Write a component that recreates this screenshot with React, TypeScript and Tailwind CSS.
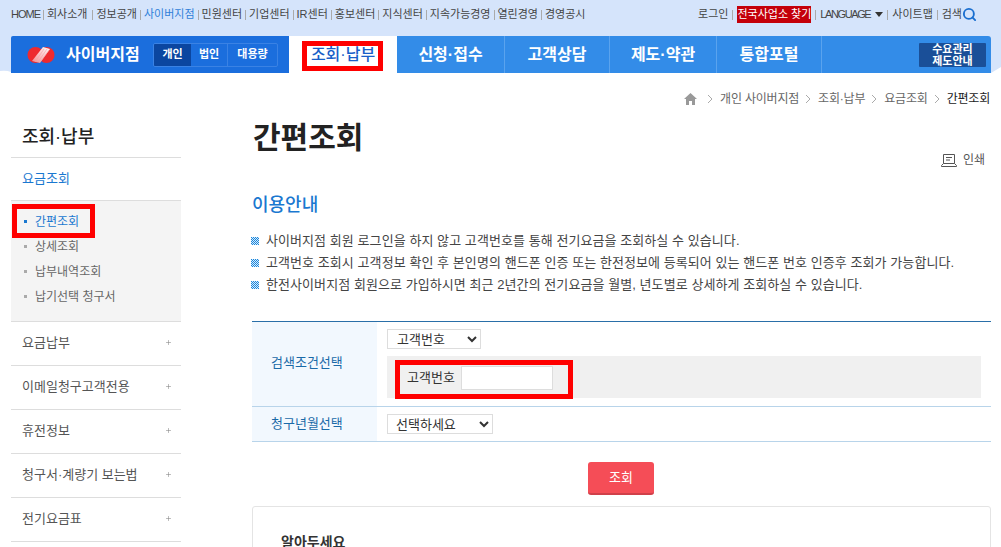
import { Plus, Search } from "lucide-react";

const FONT = "font-['Liberation_Sans','Noto_Sans_CJK_KR',sans-serif]";

const topLinks = ["HOME", "회사소개", "정보공개", "사이버지점", "민원센터", "기업센터", "IR센터", "홍보센터", "지식센터", "지속가능경영", "열린경영", "경영공시"];
const navItems = [
  { label: "신청·접수", width: "w-[108px]" },
  { label: "고객상담", width: "w-[105px]" },
  { label: "제도·약관", width: "w-[107px]" },
  { label: "통합포털", width: "w-[105px]" },
];
const crumbs = ["개인 사이버지점", "조회·납부", "요금조회"];
const subMenu = ["상세조회", "납부내역조회", "납기선택 청구서"];
const sideMenu = ["요금납부", "이메일청구고객전용", "휴전정보", "청구서·계량기 보는법", "전기요금표"];
const notices = [
  "사이버지점 회원 로그인을 하지 않고 고객번호를 통해 전기요금을 조회하실 수 있습니다.",
  "고객번호 조회시 고객정보 확인 후 본인명의 핸드폰 인증 또는 한전정보에 등록되어 있는 핸드폰 번호 인증후 조회가 가능합니다.",
  "한전사이버지점 회원으로 가입하시면 최근 2년간의 전기요금을 월별, 년도별로 상세하게 조회하실 수 있습니다.",
];

function linkClass(link: string) {
  if (link === "사이버지점") return "text-[#2f7fd8]";
  if (link === "HOME") return "tracking-[-1px]";
  if (link === "회사소개") return "mr-[2px]";
  return "";
}

function Logo() {
  return (
    <svg width="28" height="18" viewBox="0 0 28 18" className="shrink-0">
      <defs>
        <linearGradient id="logoBand" x1="0" y1="1" x2="1" y2="0">
          <stop offset="0" stopColor="#f58a8d" />
          <stop offset="1" stopColor="#fff" />
        </linearGradient>
      </defs>
      <circle cx="8.5" cy="9" r="8" fill="#ee2a2e" />
      <circle cx="19.5" cy="9" r="8" fill="#ee2a2e" />
      <path d="M5 15 L16 1 L23 3 L13 17 Z" fill="url(#logoBand)" />
      <path d="M8 16 L17 3 M11 16 L20 3 M14 15 L22 4" stroke="#f7a0a3" strokeWidth="0.6" />
    </svg>
  );
}

function NoticeMark() {
  return (
    <svg width="8" height="8" viewBox="0 0 8 8" className="shrink-0">
      <rect width="8" height="8" fill="#d6ebfb" />
      {[0, 2, 4, 6].map((x) =>
        [0, 2, 4, 6].map((y) => (
          <g key={`${x}-${y}`} fill="#1a86dc">
            <rect x={x} y={y} width="1" height="1" />
            <rect x={x + 1} y={y + 1} width="1" height="1" />
          </g>
        )),
      )}
    </svg>
  );
}

function Chevron() {
  return (
    <svg width="7" height="10" viewBox="0 0 7 10" fill="none" stroke="#aaa" strokeWidth="1" className="shrink-0">
      <path d="M1 1l4 4-4 4" />
    </svg>
  );
}

function Sep({ wide }: { wide?: boolean }) {
  return <span className={`h-[10px] w-px bg-[#aaa] ${wide ? "mx-[4px]" : "mx-[3px]"}`} />;
}

export default function App() {
  return (
    <div className={`relative h-[547px] w-[1001px] overflow-hidden bg-white text-[#444] ${FONT}`}>
      {/* Top band */}
      <header className="relative h-[73px] bg-[#d5e4fb]">
        {/* curved band edges */}
        <svg width="11" height="4" viewBox="0 0 11 4" className="absolute bottom-0 left-0">
          <path d="M0 4V2Q6 1 11 3V4Z" fill="#fff" />
        </svg>
        <svg width="10" height="6" viewBox="0 0 10 6" className="absolute bottom-0 right-0">
          <path d="M0 6L10 0V6Z" fill="#fff" />
        </svg>
        <div className="flex h-[36px] items-center justify-between pb-[7px] pl-[11px] pr-[24px] text-[11px] text-[#444]">
          <div className="flex items-center">
            {topLinks.map((link, i) => (
              <span key={link} className="flex items-center">
                {i > 0 && <Sep />}
                <span className={linkClass(link)}>{link}</span>
              </span>
            ))}
          </div>
          <div className="flex items-center">
            <span>로그인</span>
            <Sep wide />
            <span className="bg-[#c4000a] text-white">전국사업소 찾기</span>
            <Sep wide />
            <span className="tracking-[-1.4px]">LANGUAGE</span>
            <span className="ml-[5px] h-0 w-0 border-x-[4px] border-t-[5px] border-x-transparent border-t-[#333]" />
            <Sep wide />
            <span>사이트맵</span>
            <Sep wide />
            <span>검색</span>
            <Search size={15} strokeWidth={3} className="text-[#1a6fd0]" />
          </div>
        </div>
        <nav className="relative mx-[11px] flex h-[37px] w-[980px] items-stretch">
          <div className="flex w-[278px] items-center rounded-tl-[2px] bg-[#1b6edd] pl-[16px]">
            <Logo />
            <span className="ml-[11px] w-[87px] text-[16px] font-bold text-white">사이버지점</span>
            <div className="flex h-[24px] overflow-hidden rounded-[2px] border border-[#3a82e4] text-[11px] font-bold text-white">
              <span className="flex w-[37px] items-center justify-center bg-[#0b46a0]">개인</span>
              <span className="flex w-[37px] items-center justify-center border-r border-[#3a82e4]">법인</span>
              <span className="flex w-[49px] items-center justify-center">대용량</span>
            </div>
          </div>
          <div className="flex w-[108px] items-center justify-center bg-white text-[16px] font-medium text-[#1a5fc8]">조회·납부</div>
          <div className="flex flex-1 items-stretch rounded-tr-[3px] bg-[#338ce8] text-[16px] font-bold text-white">
            {navItems.map((item) => (
              <div key={item.label} className={`flex items-center justify-center border-r border-[#5aa3ee] ${item.width}`}>
                {item.label}
              </div>
            ))}
            <div className="ml-auto mr-[5px] flex items-center">
              <div className="flex h-[24px] w-[67px] flex-col items-center justify-center rounded-[1px] bg-[#1a4f98] text-[11px] font-bold leading-[12px]">
                <span>수요관리</span>
                <span>제도안내</span>
              </div>
            </div>
          </div>
        </nav>
      </header>

      {/* Breadcrumb */}
      <div className="flex h-[47px] items-center justify-end pr-[11px] pt-[5px] text-[12px] tracking-[-0.2px] text-[#666]">
        <svg width="13" height="12" viewBox="0 0 13 12" className="mr-[10px]">
          <path d="M6.5 0L13 6h-2v6H8V8H5v4H2V6H0z" fill="#999" />
        </svg>
        <Chevron />
        {crumbs.map((crumb, i) => (
          <span key={crumb} className="flex items-center">
            <span className={i === 0 ? "ml-[6px]" : ""}>{crumb}</span>
            <span className="mx-[6px] flex"><Chevron /></span>
          </span>
        ))}
        <span className="text-[#222]">간편조회</span>
      </div>

      <div className="flex pl-[11px]">
        {/* Sidebar */}
        <aside className="w-[170px] shrink-0 pt-[6px] text-[13px]">
          <h2 className="flex h-[32px] items-center border-b border-[#ddd] pb-[10px] pl-[11px] text-[18px] font-medium text-[#222]">
            <span className="translate-y-[1px]">조회·납부</span>
          </h2>
          <div className="flex h-[43px] items-center border-b border-[#ddd] pl-[11px] text-[#1a78d0]">요금조회</div>
          <ul className="h-[121px] border-b border-[#ddd] bg-[#f4f4f4] pl-[13px] pt-[8px] text-[12px] text-[#666]">
            <li className="flex h-[25px] items-center text-[#1a78d0]">
              <span className="mr-[8px] h-[3px] w-[3px] bg-[#1a78d0]" />
              간편조회
            </li>
            {subMenu.map((item) => (
              <li key={item} className="flex h-[25px] items-center">
                <span className="mr-[8px] h-[3px] w-[3px] bg-[#aaa]" />
                {item}
              </li>
            ))}
          </ul>
          {sideMenu.map((item) => (
            <div key={item} className="flex h-[44px] items-center justify-between border-b border-[#ddd] pb-[2px] pl-[11px] pr-[9px] text-[#555]">
              {item}
              <Plus size={7} strokeWidth={2} className="text-[#888]" />
            </div>
          ))}
        </aside>

        {/* Main column */}
        <main className="ml-[71px] w-[739px]">
          <h1 className="mt-[2px] h-[28px] pl-px text-[30px] font-bold leading-[32px] text-[#222]">간편조회</h1>
          <div className="flex h-[20px] items-center justify-end pr-[6px] text-[12px] text-[#555]">
            <svg width="16" height="13" viewBox="0 0 16 13" fill="none" stroke="#555" className="mr-[6px]">
              <path d="M2.5.5h11v9h-11zM.5 12.5h15v-1l-2-2M.5 12.5v-1l2-2M5 3.5h6M5 6h4" />
            </svg>
            인쇄
          </div>
          <h3 className="mt-[25px] h-[35px] text-[18px] font-medium leading-[20px] text-[#1a78d0]">이용안내</h3>
          <ul className="-ml-px text-[13px] tracking-[0.07px] text-[#444]">
            {notices.map((line) => (
              <li key={line} className="flex h-[22px] items-center gap-[7px] whitespace-nowrap">
                <NoticeMark />
                {line}
              </li>
            ))}
          </ul>

          {/* Search table */}
          <div className="mt-[25px] border-t border-[#2a6fa8] text-[13px]">
            <div className="flex h-[85px] border-b border-[#b8d4ea]">
              <div className="flex w-[125px] items-center bg-[#f2f8fe] pb-[2px] pl-[19px] text-[#1a6aa8]">검색조건선택</div>
              <div className="flex-1 px-[10px] pt-[7px]">
                <select className="block h-[20px] w-[94px] border border-[#ddd] bg-white pl-[5px] text-[13px] text-[#333]">
                  <option>고객번호</option>
                </select>
                <div className="mt-[7px] flex h-[42px] items-center bg-[#f0f0f0] pl-[20px] pt-[2px]">
                  <span className="text-[13px] text-[#333]">고객번호</span>
                  <input className="ml-[6px] h-[24px] w-[92px] border border-[#ddd] bg-white" />
                </div>
              </div>
            </div>
            <div className="flex h-[35px] border-b border-[#b8d4ea]">
              <div className="flex w-[125px] items-center bg-[#f2f8fe] pl-[19px] text-[#1a6aa8]">청구년월선택</div>
              <div className="flex flex-1 items-center pl-[10px]">
                <select className="h-[20px] w-[106px] border border-[#ddd] bg-white pl-[4px] text-[13px] text-[#333]">
                  <option>선택하세요</option>
                </select>
              </div>
            </div>
          </div>

          <div className="mt-[20px] flex justify-center">
            <button className="mr-px h-[33px] w-[66px] rounded-[3px] border-b-2 border-[#d0404a] bg-[#f54d57] text-[13px] text-white">조회</button>
          </div>

          <div className="mt-[11px] h-[60px] rounded-t-[3px] border border-[#e4e4e4] pl-[28px] pt-[25px] text-[14px] font-bold text-[#333]">알아두세요</div>
        </main>
      </div>

      {/* Red annotation boxes from the screenshot */}
      <div className="pointer-events-none absolute left-[302px] top-[41px] h-[30px] w-[81px] border-[5px] border-[#ff0000]" />
      <div className="pointer-events-none absolute left-[12px] top-[204px] h-[34px] w-[83px] border-[5px] border-[#ff0000]" />
      <div className="pointer-events-none absolute left-[395px] top-[360px] h-[39px] w-[178px] border-[5px] border-[#ff0000]" />
    </div>
  );
}
